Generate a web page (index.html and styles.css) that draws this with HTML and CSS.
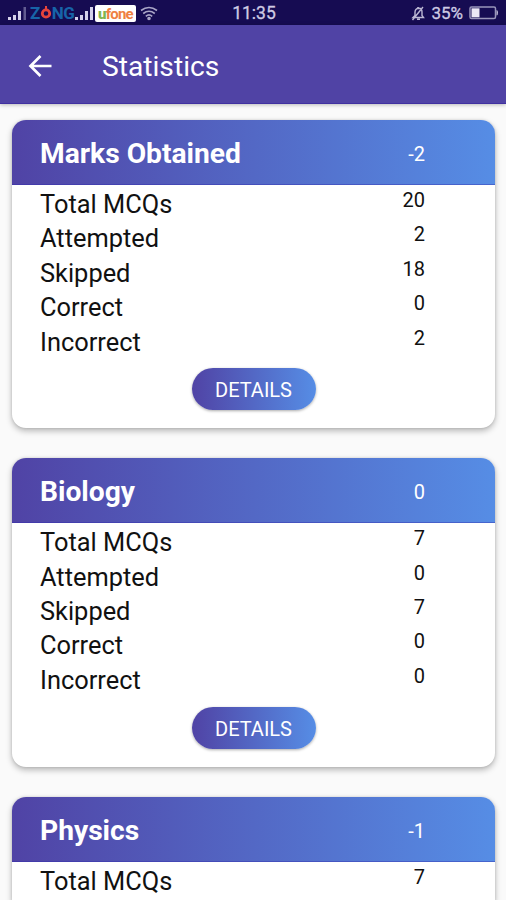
FILE: index.html
```html
<!DOCTYPE html>
<html lang="en">
<head>
<meta charset="utf-8">
<title>Statistics</title>
<link rel="stylesheet" href="styles.css">
</head>
<body>
<div class="status">
  <div class="carriers">
    <svg class="signal" width="20" height="14" viewBox="0 0 20 14"><path d="M0 11h3v3H0zM5 9h3v5H5zM10 5h3v9h-3z" fill="#d5d1ea"/><path d="M15.500 1h2.500v13h-2.500z" fill="#625c91"/></svg>
    <span class="zong">Z<svg width="12" height="14" viewBox="0 0 12 14"><circle cx="6" cy="7.500" r="3.700" fill="none" stroke="#e6443c" stroke-width="2.800"/><path d="M6 0v4" stroke="#e6443c" stroke-width="2"/></svg>NG</span>
    <svg class="signal" width="20" height="14" viewBox="0 0 20 14"><path d="M0 11h3v3H0zM5 9h3v5H5zM10 5h3v9h-3zM15 1h3v13h-3z" fill="#d5d1ea"/></svg>
    <span class="ufone"><b>u</b>fone</span>
    <svg class="wifi" width="18" height="15" viewBox="0 0 18 15" fill="none" stroke="#aaa6c7" stroke-width="1.600"><path d="M1 4.500Q9-1.500 17 4.500M3.200 7.500Q9 3 14.800 7.500M5.800 10.300Q9 7.600 12.200 10.300"/><circle cx="9" cy="12.500" r="1" fill="#aaa6c7"/></svg>
  </div>
  <span class="clock">11:35</span>
  <div class="power">
    <svg width="14" height="15" viewBox="0 0 14 15" fill="none" stroke="#bcb8d4" stroke-width="1.400"><path d="M2 11.500h10.500l-1.500-2V6Q11 2.500 8 2.300 4.300 2.400 4 6v3.500zM7 1v1.500M6 13.300h3M12 1L1.500 14"/></svg>
    <span>35%</span>
    <svg class="battery" width="30" height="14" viewBox="0 0 30 14"><rect x="1" y="1" width="25.500" height="11.500" rx="1.500" fill="none" stroke="#9995ba" stroke-width="1.500"/><path d="M2.500 2.300h8v9h-8z" fill="#eceaf5"/><path d="M27.500 4q1.500 0 1.500 2.800t-1.500 2.800z" fill="#c3c0da"/></svg>
  </div>
</div>
<header class="appbar">
  <svg width="24" height="24" viewBox="0 0 24 24" fill="none" stroke="#fff" stroke-width="2.700"><path d="M23.500 11H2.500M12.500 1L2.500 11l10 10"/></svg>
  <h1>Statistics</h1>
</header>
<main>
  <section class="card">
    <div class="head"><h2>Marks Obtained</h2><span>-2</span></div>
    <dl>
      <div><dt>Total MCQs</dt><dd>20</dd></div>
      <div><dt>Attempted</dt><dd>2</dd></div>
      <div><dt>Skipped</dt><dd>18</dd></div>
      <div><dt>Correct</dt><dd>0</dd></div>
      <div><dt>Incorrect</dt><dd>2</dd></div>
    </dl>
    <button>DETAILS</button>
  </section>
  <section class="card">
    <div class="head"><h2>Biology</h2><span>0</span></div>
    <dl>
      <div><dt>Total MCQs</dt><dd>7</dd></div>
      <div><dt>Attempted</dt><dd>0</dd></div>
      <div><dt>Skipped</dt><dd>7</dd></div>
      <div><dt>Correct</dt><dd>0</dd></div>
      <div><dt>Incorrect</dt><dd>0</dd></div>
    </dl>
    <button>DETAILS</button>
  </section>
  <section class="card last">
    <div class="head"><h2>Physics</h2><span>-1</span></div>
    <dl>
      <div><dt>Total MCQs</dt><dd>7</dd></div>
    </dl>
  </section>
</main>
</body>
</html>
```
FILE: styles.css
```css
* { box-sizing: border-box; }
body {
  margin: 0;
  height: 900px;
  overflow: hidden;
  display: flex;
  flex-direction: column;
  background: #fafafa;
  font-family: Roboto, sans-serif;
  color: #111;
}
h1, h2, dl, dd { margin: 0; }
.status {
  flex: none;
  height: 25px;
  padding: 1px 7px 0 8px;
  display: grid;
  grid-template-columns: 1fr auto 1fr;
  align-items: center;
  background: #160c52;
  color: #cfcbe3;
  font-size: 18px;
}
.clock { padding-left: 1px; font-size: 17.500px; -webkit-text-stroke: 0.3px; }
.carriers, .power { display: flex; align-items: center; }
.power { justify-content: flex-end; gap: 6px; font-size: 17px; -webkit-text-stroke: 0.3px; }
.zong {
  display: flex;
  align-items: center;
  margin-left: 2px;
  width: 45px;
  color: #1764a8;
  font: bold 17px/16px Roboto, sans-serif;
  letter-spacing: -0.5px;
}
.zong svg { flex: none; }
.ufone {
  width: 41px;
  height: 17px;
  border-radius: 2px;
  background: #fff;
  color: #ef8141;
  font: bold 15px/19px Roboto, sans-serif;
  letter-spacing: -0.8px;
  text-align: center;
}
.ufone b { color: #80b650; }
.wifi { margin-left: 4px; }
.appbar {
  flex: none;
  height: 79px;
  padding: 4px 0 0 28px;
  display: flex;
  align-items: center;
  gap: 50px;
  background: #5043a5;
  box-shadow: inset 0 -1px #4030a0, 0 1px 4px #0004;
  color: #fff;
}
.appbar h1 { font-size: 28.200px; font-weight: 400; line-height: 34px; }
main { flex: 1; min-height: 0; overflow: hidden; padding: 16px 11px 0 12px; }
.card {
  height: 308.300px;
  margin-bottom: 30px;
  display: flex;
  flex-direction: column;
  align-items: center;
  border-radius: 14px;
  background: #fff;
  box-shadow: 0 3px 6px #0004, 0 0 3px #0002;
}
.last { height: 104px; margin-bottom: 0; border-radius: 14px 14px 0 0; }
.head {
  width: 100%;
  height: 65px;
  padding: 3px 70px 0 28px;
  display: flex;
  align-items: center;
  justify-content: space-between;
  border-radius: 14px 14px 0 0;
  background: linear-gradient(90deg, #5043a5, #568de5);
  box-shadow: inset 0 -1px #2f2bac66;
  color: #fff;
}
.head h2 { font-size: 28.200px; font-weight: 700; line-height: 34px; }
.head span { font-size: 20px; }
dl { width: 100%; padding: 2px 70px 0 28px; }
dl div { height: 34.400px; display: flex; justify-content: space-between; }
dt { font-size: 25.400px; line-height: 34.500px; }
dd { font-size: 20px; line-height: 26px; }
button {
  width: 124px;
  height: 42px;
  margin-top: 9.500px;
  padding: 2px 0 0;
  border: 0;
  border-radius: 21px;
  background: linear-gradient(90deg, #5043a5, #568de5);
  box-shadow: 0 1px 3px #0005;
  color: #fff;
  font: 20px Roboto, sans-serif;
}
```
